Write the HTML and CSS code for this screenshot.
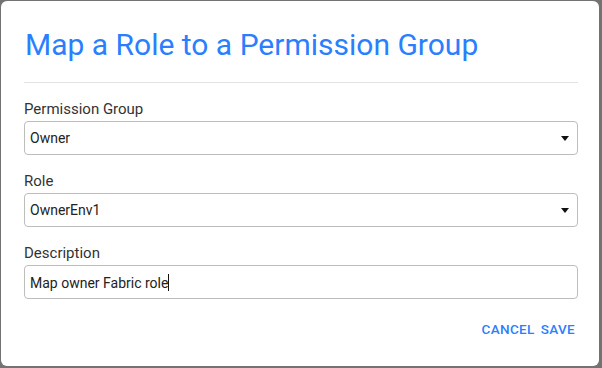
FILE: index.html
```html
<!DOCTYPE html>
<html lang="en">
<head>
    <meta charset="UTF-8">
    <meta name="viewport" content="width=device-width, initial-scale=1.0">
    <link rel="stylesheet" href="styles.css">
    <title>Map a Role to a Permission Group</title>
</head>
<body>
    <div class="dialog">
        <h1 class="titulo">Map a Role to a Permission Group</h1>
        <hr class="linha">
        <form class="campos">
            <div class="campo">
                <label for="igrupo">Permission Group</label>
                <div class="caixa">
                    <span id="igrupo" class="valor">Owner</span>
                    <span class="seta"></span>
                </div>
            </div>
            <div class="campo">
                <label for="irole">Role</label>
                <div class="caixa">
                    <span id="irole" class="valor">OwnerEnv1</span>
                    <span class="seta"></span>
                </div>
            </div>
            <div class="campo">
                <label for="idesc">Description</label>
                <div class="caixa">
                    <span id="idesc" class="valor">Map owner Fabric role<span class="cursor"></span></span>
                </div>
            </div>
            <div class="botoes">
                <button type="button" class="botao">CANCEL</button>
                <button type="button" class="botao">SAVE</button>
            </div>
        </form>
    </div>
</body>
</html>
```

FILE: styles.css
```css
body{
    margin: 0;
    background: #737373;
    font-family: Roboto, "Liberation Sans", sans-serif;
}
.dialog{
    box-sizing: border-box;
    width: 598px;
    height: 365px;
    margin: 1px 0 0 1px;
    background: #fff;
    border-radius: 6px;
    padding: 26px 21px 0 23px;
}
.titulo{
    margin: 0;
    font-size: 30px;
    font-weight: 400;
    color: #2b7fff;
    line-height: 36px;
    padding-left: 1px;
}
.linha{
    border: none;
    border-top: 1px solid #e2e2e2;
    margin: 19px 0 0 0;
}
.campos{
    margin: 0;
    padding-top: 16px;
}
.campo label{
    display: block;
    font-size: 15px;
    color: #333;
    line-height: 20px;
    margin-bottom: 2px;
}
.campo{
    margin-bottom: 16px;
}
.caixa{
    box-sizing: border-box;
    height: 34px;
    border: 1px solid #bdbdbd;
    border-radius: 4px;
    display: flex;
    align-items: center;
    justify-content: space-between;
    padding: 0 8px 0 5px;
}
.valor{
    font-size: 14px;
    color: #222;
}
.cursor{
    display: inline-block;
    width: 1px;
    height: 17px;
    background: #111;
    vertical-align: -3px;
}
.seta{
    width: 0;
    height: 0;
    border-left: 4px solid transparent;
    border-right: 4px solid transparent;
    border-top: 5px solid #111;
}
.botoes{
    display: flex;
    justify-content: flex-end;
    gap: 6px;
    padding-top: 6px;
    padding-right: 3px;
}
.botao{
    border: none;
    background: none;
    padding: 0;
    font-family: Roboto, "Liberation Sans", sans-serif;
    font-size: 13.5px;
    font-weight: 500;
    letter-spacing: 0.35px;
    color: #2b7fff;
}
```
